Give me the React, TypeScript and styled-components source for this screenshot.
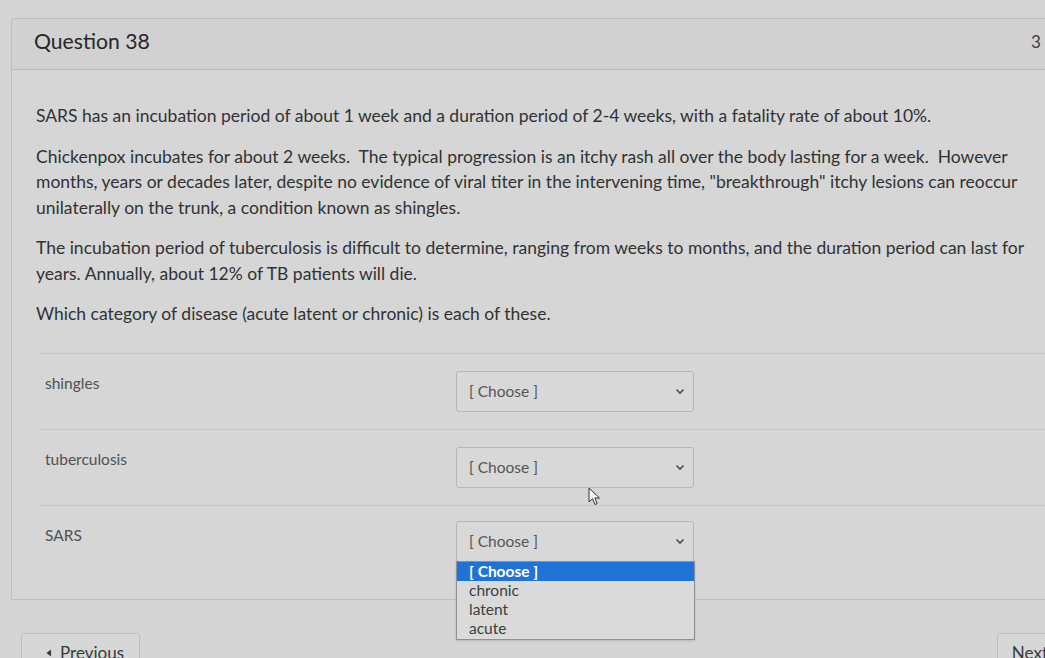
import * as React from 'react'
import styled, { createGlobalStyle } from 'styled-components'

const GlobalStyle = createGlobalStyle`
  html, body {
    margin: 0;
    padding: 0;
    background: #d3d4d3;
    overflow: hidden;
  }
  body {
    font-family: Lato, "Open Sans", "Liberation Sans", sans-serif;
    color: #2f3032;
  }
`

const S = {
  Page: styled.div`
  position: relative;
  width: 1045px;
  height: 658px;
  overflow: hidden;
  padding: 18px 0 0 11px;
  box-sizing: border-box;
`,
  Card: styled.div`
  width: 1078px;
  border: 1px solid #bdbebd;
  border-radius: 2px;
  background: #d5d6d5;
`,
  Header: styled.div`
  display: flex;
  align-items: center;
  justify-content: space-between;
  height: 51px;
  padding: 0 22px 6px 22px;
  box-sizing: border-box;
  background: #d0d1d0;
  border-bottom: 1px solid #b8b9b8;
`,
  Title: styled.h2`
  margin: 0;
  font-size: 21.2px;
  font-weight: 400;
  color: #262729;
`,
  Points: styled.span`
  font-size: 17px;
  color: #3a3b3d;
`,
  Body: styled.div`
  padding: 33px 24px 0 24px;
`,
  Text: styled.p`
  margin: 0 0 15px 0;
  max-width: 995px;
  font-size: 17.5px;
  line-height: 25.5px;
  color: #313234;
`,
  Answers: styled.div`
  margin: 26px -24px 0 5px;
`,
  Row: styled.div<{ $last?: boolean }>`
  display: grid;
  grid-template-columns: 411px 238px;
  align-items: start;
  height: ${p => (p.$last ? '93px' : '75px')};
  border-top: 1px solid #c4c5c4;
  padding: 0 0 0 4px;
`,
  Label: styled.div`
  padding-top: 20px;
  font-size: 15.5px;
  color: #505153;
`,
  SelectWrap: styled.div<{ $shift?: number }>`
  position: relative;
  margin-top: ${p => 17 - (p.$shift ?? 0)}px;
`,
  Select: styled.div`
  display: flex;
  align-items: center;
  justify-content: space-between;
  height: 39px;
  padding: 0 8px 0 12px;
  border: 1px solid #b6b7b6;
  border-radius: 3px;
  background: #d7d8d7;
  font-size: 15.5px;
  color: #555658;
`,
  Options: styled.ul`
  position: absolute;
  top: 40px;
  left: 0;
  width: 237px;
  margin: 0;
  padding: 0 0 1px 0;
  list-style: none;
  border: 1px solid #8f908f;
  background: #d9dad9;
  box-shadow: 0 1px 2px rgba(0, 0, 0, 0.15);
  z-index: 2;
`,
  Option: styled.li<{ $active?: boolean }>`
  height: 19px;
  line-height: 18px;
  padding-left: 12px;
  font-size: 15.5px;
  font-weight: ${p => (p.$active ? 700 : 400)};
  color: ${p => (p.$active ? '#ffffff' : '#3d3e40')};
  background: ${p => (p.$active ? '#1f72d6' : 'transparent')};
`,
  Nav: styled.div`
  display: flex;
  justify-content: space-between;
  margin: 33px 0 0 10px;
`,
  NavButton: styled.button`
  display: flex;
  align-items: center;
  gap: 8px;
  height: 40px;
  padding: 0 15px 0 24px;
  border: 1px solid #bcbdbc;
  border-radius: 3px;
  background: #d6d7d6;
  font-family: inherit;
  font-size: 17px;
  color: #3a3b3d;
  align-self: flex-start;
`,
  NextButton: styled.button`
  height: 40px;
  margin-right: -18px;
  padding: 0 14px;
  border: 1px solid #bcbdbc;
  border-radius: 3px;
  background: #d6d7d6;
  font-family: inherit;
  font-size: 17px;
  color: #3a3b3d;
`,
  Cursor: styled.svg`
  position: absolute;
  left: 588px;
  top: 487px;
  z-index: 3;
`,
}

const Chevron = () => (
  <svg width="10" height="7" viewBox="0 0 10 7">
    <path d="M1.5 1.5 L5 5 L8.5 1.5" fill="none" stroke="#4a4b4d" strokeWidth="1.6" />
  </svg>
)

type RowData = { label: string; open?: boolean; shift?: number }

const rows: RowData[] = [
  { label: 'shingles' },
  { label: 'tuberculosis' },
  { label: 'SARS', open: true, shift: 2 },
]

const options = ['[ Choose ]', 'chronic', 'latent', 'acute']

export default function App() {
  return (
    <S.Page>
      <GlobalStyle />
      <S.Card>
        <S.Header>
          <S.Title>Question 38</S.Title>
          <S.Points>3 pts</S.Points>
        </S.Header>
        <S.Body>
          <S.Text>
            SARS has an incubation period of about 1 week and a duration period of 2-4 weeks, with a fatality rate of about 10%.
          </S.Text>
          <S.Text>
            Chickenpox incubates for about 2 weeks.&nbsp; The typical progression is an itchy rash all over the body lasting for a week.&nbsp; However months, years or decades later, despite no evidence of viral titer in the intervening time, "breakthrough" itchy lesions can reoccur unilaterally on the trunk, a condition known as shingles.
          </S.Text>
          <S.Text>
            The incubation period of tuberculosis is difficult to determine, ranging from weeks to months, and the duration period can last for years. Annually, about 12% of TB patients will die.
          </S.Text>
          <S.Text>Which category of disease (acute latent or chronic) is each of these.</S.Text>
          <S.Answers>
            {rows.map((r, i) => (
              <S.Row key={r.label} $last={i === rows.length - 1}>
                <S.Label>{r.label}</S.Label>
                <S.SelectWrap $shift={r.shift}>
                  <S.Select>
                    <span>[ Choose ]</span>
                    <Chevron />
                  </S.Select>
                  {r.open && (
                    <S.Options>
                      {options.map((o, j) => (
                        <S.Option key={o} $active={j === 0}>{o}</S.Option>
                      ))}
                    </S.Options>
                  )}
                </S.SelectWrap>
              </S.Row>
            ))}
          </S.Answers>
        </S.Body>
      </S.Card>
      <S.Nav>
        <S.NavButton>
          <svg width="6" height="8" viewBox="0 0 6 8">
            <path d="M5 0.5 L0.5 4 L5 7.5 Z" fill="#3a3b3d" />
          </svg>
          Previous
        </S.NavButton>
        <S.NextButton>Next</S.NextButton>
      </S.Nav>
      <S.Cursor width="14" height="20" viewBox="0 0 14 20">
        <path d="M1 1 L1 15 L4.5 11.8 L7 17.5 L9.2 16.5 L6.8 11 L11.5 11 Z" fill="#f4f4f4" stroke="#333" strokeWidth="1" strokeLinejoin="round" />
      </S.Cursor>
    </S.Page>
  )
}
